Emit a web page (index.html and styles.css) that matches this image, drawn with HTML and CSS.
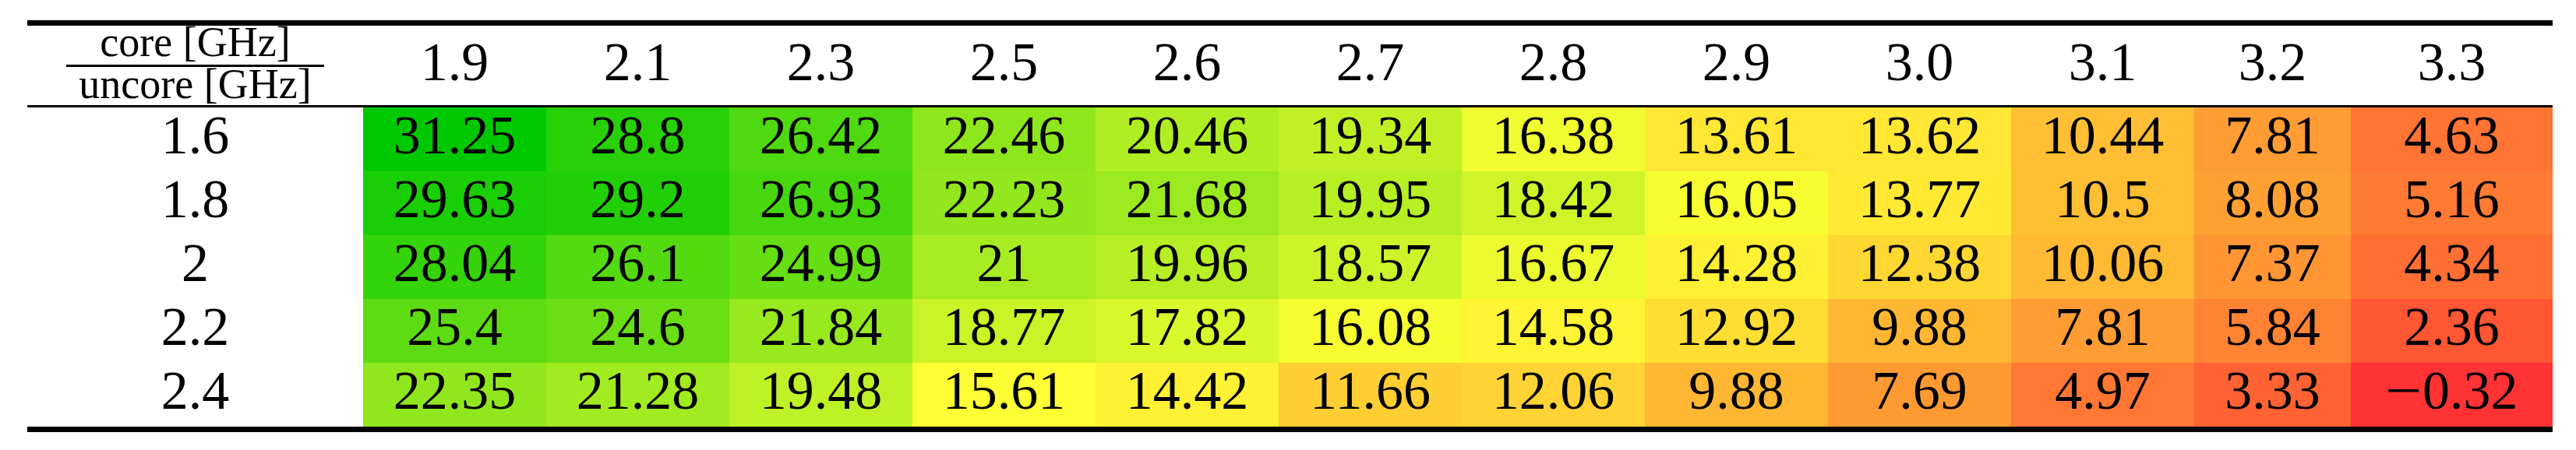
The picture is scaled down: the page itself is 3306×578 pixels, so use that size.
FILE: index.html
```html
<!DOCTYPE html>
<html lang="en">
<head>
<meta charset="utf-8">
<title>Core / uncore frequency table</title>
<link rel="stylesheet" href="styles.css">
</head>
<body>
<div class="wrap">
<table class="freq">
<colgroup>
<col class="c-label">
<col class="c-5"><col class="c-5"><col class="c-5"><col class="c-5"><col class="c-5">
<col class="c-5"><col class="c-5"><col class="c-5"><col class="c-5"><col class="c-5">
<col class="c-4"><col class="c-m">
</colgroup>
<thead>
<tr>
<th class="corner"><div class="frac"><span class="num">core [GHz]</span><span class="den">uncore [GHz]</span></div></th>
<th>1.9</th><th>2.1</th><th>2.3</th><th>2.5</th><th>2.6</th><th>2.7</th><th>2.8</th><th>2.9</th><th>3.0</th><th>3.1</th><th>3.2</th><th>3.3</th>
</tr>
</thead>
<tbody>
<tr>
<th class="rl">1.6</th>
<td style="background:#00C800">31.25</td>
<td style="background:#28D008">28.8</td>
<td style="background:#4ED910">26.42</td>
<td style="background:#8EE71C">22.46</td>
<td style="background:#AEEE23">20.46</td>
<td style="background:#C0F126">19.34</td>
<td style="background:#F0FC30">16.38</td>
<td style="background:#FFE733">13.61</td>
<td style="background:#FFE733">13.62</td>
<td style="background:#FFBE33">10.44</td>
<td style="background:#FF9C33">7.81</td>
<td style="background:#FF7333">4.63</td>
</tr>
<tr>
<th class="rl">1.8</th>
<td style="background:#1ACE05">29.63</td>
<td style="background:#21CF07">29.2</td>
<td style="background:#46D70E">26.93</td>
<td style="background:#92E71D">22.23</td>
<td style="background:#9BE91F">21.68</td>
<td style="background:#B7EF25">19.95</td>
<td style="background:#CFF529">18.42</td>
<td style="background:#F6FD31">16.05</td>
<td style="background:#FFE933">13.77</td>
<td style="background:#FFBF33">10.5</td>
<td style="background:#FFA033">8.08</td>
<td style="background:#FF7A33">5.16</td>
</tr>
<tr>
<th class="rl">2</th>
<td style="background:#34D30A">28.04</td>
<td style="background:#53DA11">26.1</td>
<td style="background:#65DE14">24.99</td>
<td style="background:#A6EC21">21</td>
<td style="background:#B6EF24">19.96</td>
<td style="background:#CDF429">18.57</td>
<td style="background:#ECFB2F">16.67</td>
<td style="background:#FFF033">14.28</td>
<td style="background:#FFD733">12.38</td>
<td style="background:#FFB933">10.06</td>
<td style="background:#FF9633">7.37</td>
<td style="background:#FF6F33">4.34</td>
</tr>
<tr>
<th class="rl">2.2</th>
<td style="background:#5EDC13">25.4</td>
<td style="background:#6BDF15">24.6</td>
<td style="background:#98E91E">21.84</td>
<td style="background:#CAF328">18.77</td>
<td style="background:#D9F72B">17.82</td>
<td style="background:#F5FD31">16.08</td>
<td style="background:#FFF433">14.58</td>
<td style="background:#FFDE33">12.92</td>
<td style="background:#FFB733">9.88</td>
<td style="background:#FF9C33">7.81</td>
<td style="background:#FF8333">5.84</td>
<td style="background:#FF5633">2.36</td>
</tr>
<tr>
<th class="rl">2.4</th>
<td style="background:#90E71D">22.35</td>
<td style="background:#A1EB20">21.28</td>
<td style="background:#BEF126">19.48</td>
<td style="background:#FDFE33">15.61</td>
<td style="background:#FFF133">14.42</td>
<td style="background:#FFCE33">11.66</td>
<td style="background:#FFD333">12.06</td>
<td style="background:#FFB733">9.88</td>
<td style="background:#FF9A33">7.69</td>
<td style="background:#FF7733">4.97</td>
<td style="background:#FF6233">3.33</td>
<td style="background:#FF3333"><span class="minus">−</span>0.32</td>
</tr>
</tbody>
</table>
</div>
</body>
</html>
```
FILE: styles.css
```css
html, body {
  margin: 0;
  padding: 0;
  background: #ffffff;
}

.wrap {
  margin: 26px 0 0 35px;
  width: 3241px;
  border-top: 7px solid #000;
  border-bottom: 7px solid #000;
}

.freq {
  width: 3241px;
  table-layout: fixed;
  border-collapse: separate;
  border-spacing: 0;
  font-family: "Liberation Serif", "Times New Roman", serif;
  color: #000;
}

.c-label { width: 431px; }
.c-5 { width: 235px; }
.c-4 { width: 201px; }
.c-m { width: 259px; }

.freq th,
.freq td {
  padding: 0;
  text-align: center;
  vertical-align: top;
  font-weight: normal;
  white-space: nowrap;
}

.freq thead th {
  font-size: 70px;
  line-height: 71px;
  padding: 11px 0 20px;
  border-bottom: 3px solid #000;
}

.freq thead th.corner {
  padding: 0 0 5px;
  font-size: 54px;
  line-height: 44px;
}

.frac {
  display: flex;
  flex-direction: column;
  align-items: stretch;
  width: max-content;
  margin: 0 auto;
  font-size: 54px;
  line-height: 44px;
  text-align: center;
}

.num {
  display: block;
  margin-top: -1px;
  margin-bottom: 7px;
}

.den {
  display: block;
  border-top: 3px solid #000;
  padding: 0 16px;
}

.freq tbody th,
.freq tbody td {
  font-size: 70px;
  line-height: 71px;
  padding: 0 0 11px;
}

.minus {
  display: inline-block;
  transform: scaleX(1.2);
  margin: 0 5px 0 3px;
}
```
